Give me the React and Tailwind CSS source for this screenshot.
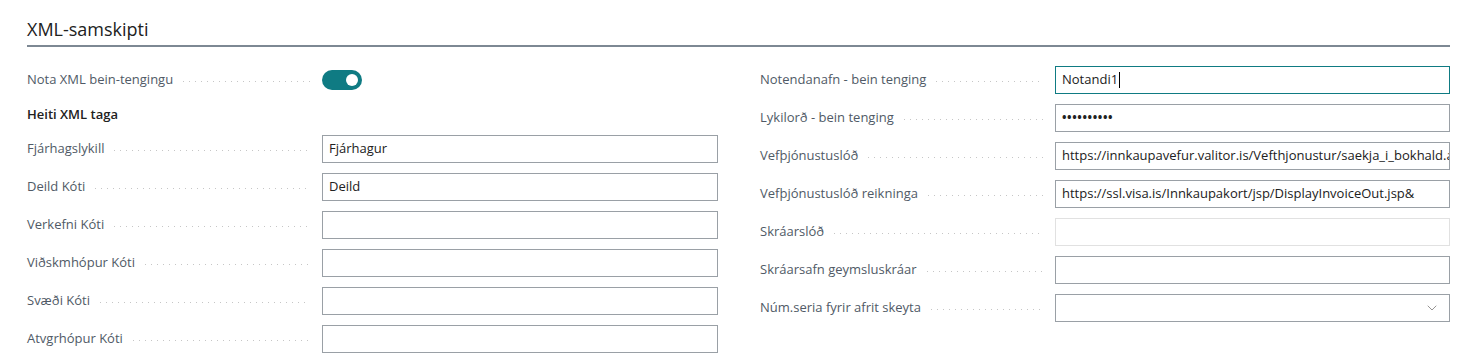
import { ChevronDown } from 'lucide-react'

const leftFields = [
  { label: 'Fjárhagslykill', value: 'Fjárhagur' },
  { label: 'Deild Kóti', value: 'Deild' },
  { label: 'Verkefni Kóti', value: '' },
  { label: 'Viðskmhópur Kóti', value: '' },
  { label: 'Svæði Kóti', value: '' },
  { label: 'Atvgrhópur Kóti', value: '' },
]

function Label({ text }) {
  return (
    <div className="w-[295px] shrink-0 flex items-center pr-3">
      <span className="text-[13px] text-[#505a66] whitespace-nowrap">{text}</span>
      <div className="flex-1 ml-2.5 mt-[3px] h-px bg-[linear-gradient(to_right,#c6c6c6_1px,transparent_1px)] bg-[length:6px_1px] bg-repeat-x" />
    </div>
  )
}

function Field({ label, children }) {
  return (
    <div className="flex items-center h-7 min-w-0">
      <Label text={label} />
      {children}
    </div>
  )
}

function TextBox({ value, className = 'border-[#9aa0a6]', cursor }) {
  return (
    <div className={`flex-1 min-w-0 h-7 border bg-white flex items-center px-[6px] text-[13px] text-[#212121] whitespace-nowrap overflow-hidden ${className}`}>
      {value}
      {cursor && <span className="w-px h-[16px] bg-black ml-px shrink-0" />}
    </div>
  )
}

export default function App() {
  return (
    <div className="bg-white w-[1465px] h-[364px] pl-[27px] pr-[15px] font-['Open_Sans',sans-serif]">
      <div className="pt-[19px] pb-[5px] border-b-2 border-[#7d8893]">
        <h2 className="text-[18px] leading-[21px] text-[#212121]">XML-samskipti</h2>
      </div>

      <div className="grid grid-cols-[691px_minmax(0,1fr)] gap-[42px] pt-[19px]">
        {/* venstri dálkur */}
        <div className="flex flex-col">
          <Field label="Nota XML bein-tengingu">
            <div className="w-10 h-5 rounded-full bg-[#0f7b83] flex items-center justify-end pr-[4px]">
              <div className="w-3 h-3 rounded-full bg-white" />
            </div>
          </Field>
          <div className="h-[22px] mt-[10px] mb-[9px] flex items-center text-[13px] font-semibold text-[#212121]">
            Heiti XML taga
          </div>
          <div className="flex flex-col gap-[10px]">
            {leftFields.map(f => (
              <Field key={f.label} label={f.label}>
                <TextBox value={f.value} />
              </Field>
            ))}
          </div>
        </div>

        {/* hægri dálkur */}
        <div className="flex flex-col gap-[10px] min-w-0">
          <Field label="Notendanafn - bein tenging">
            <TextBox value="Notandi1" className="border-[#0f7b83]" cursor />
          </Field>
          <Field label="Lykilorð - bein tenging">
            <TextBox value={<span className="text-[12px] tracking-[0.6px] font-bold">••••••••••</span>} />
          </Field>
          <Field label="Vefþjónustuslóð">
            <TextBox value="https://innkaupavefur.valitor.is/Vefthjonustur/saekja_i_bokhald.asmx" />
          </Field>
          <Field label="Vefþjónustuslóð reikninga">
            <TextBox value="https://ssl.visa.is/Innkaupakort/jsp/DisplayInvoiceOut.jsp&" />
          </Field>
          <Field label="Skráarslóð">
            <TextBox value="" className="border-[#e1e1e1] bg-[#fafafa]" />
          </Field>
          <Field label="Skráarsafn geymsluskráar">
            <TextBox value="" />
          </Field>
          <Field label="Núm.seria fyrir afrit skeyta">
            <div className="flex-1 min-w-0 h-7 border border-[#9aa0a6] flex items-center justify-end pr-[9px]">
              <ChevronDown size={16} strokeWidth={1} className="text-[#605e5c]" />
            </div>
          </Field>
        </div>
      </div>
    </div>
  )
}
